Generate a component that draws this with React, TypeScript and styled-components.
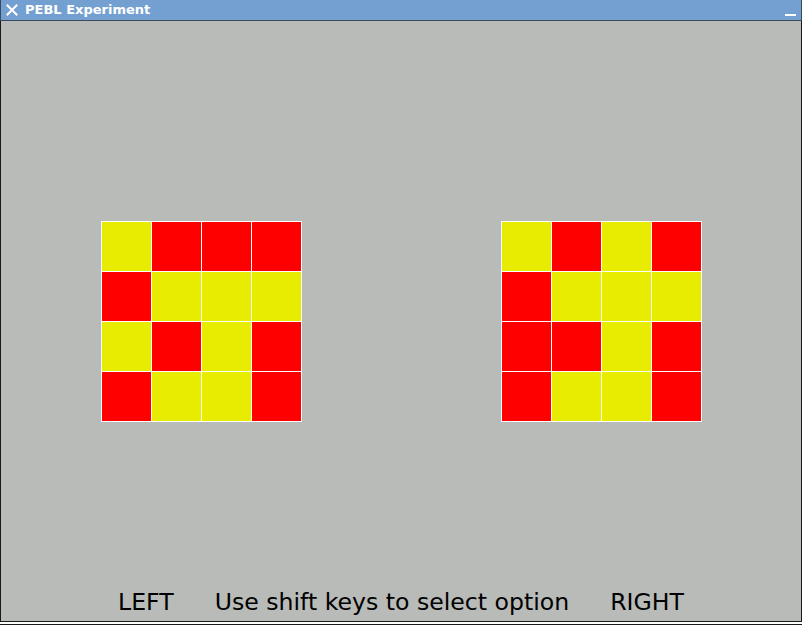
import React from "react";
import styled, { createGlobalStyle } from "styled-components";

const Global = createGlobalStyle`
  html, body { margin: 0; padding: 0; background: #ffffff; }
  body { width: 802px; height: 626px; overflow: hidden; }
`;

const Window = styled.div`
  width: 802px;
  height: 626px;
  box-sizing: border-box;
  display: flex;
  flex-direction: column;
  background: #ffffff;
`;

const TitleBar = styled.div`
  height: 20px;
  background: #74a0d1;
  border-bottom: 1px solid #3a4a5c;
  border-left: 1px solid #3a4a5c;
  border-right: 1px solid #3a4a5c;
  display: flex;
  align-items: center;
  padding: 0 5px 0 5px;
  flex-shrink: 0;
`;

const TitleText = styled.span`
  font-family: "DejaVu Sans", sans-serif;
  font-weight: bold;
  font-size: 13px;
  color: #ffffff;
  margin-left: 7px;
  flex: 1;
  line-height: 20px;
`;

const MinBar = styled.div`
  width: 11px;
  height: 2px;
  background: #ffffff;
  margin-top: 9px;
`;

const Content = styled.div`
  height: 600px;
  background: #b8bbb7;
  border-left: 1px solid #1a1a1a;
  border-right: 1px solid #1a1a1a;
  border-bottom: 1px solid #1a1a1a;
  display: flex;
  flex-direction: column;
  flex-shrink: 0;
`;

const BoardRow = styled.div`
  display: flex;
  padding: 200px 0 0 100px;
  gap: 199px;
`;

const Board = styled.div`
  display: grid;
  grid-template-columns: repeat(4, 49px);
  grid-template-rows: repeat(4, 49px);
  gap: 1px;
  padding: 1px;
  background: #ffffff;
`;

const Cell = styled.div<{ $c: "Y" | "R" }>`
  background: ${(p) => (p.$c === "Y" ? "#e8ec00" : "#ff0000")};
`;

const Prompt = styled.div`
  margin-top: auto;
  margin-bottom: 5px;
  display: flex;
  justify-content: center;
  gap: 41px;
  white-space: pre;
  font-family: "DejaVu Sans", sans-serif;
  font-size: 23.6px;
  line-height: 28px;
  color: #000000;
`;

const BottomEdge = styled.div`
  height: 2px;
  background: #ffffff;
  border-bottom: 1px solid #1a1a1a;
  flex-shrink: 0;
`;

const left = ["YRRR", "RYYY", "YRYR", "RYYR"];
const right = ["YRYR", "RYYY", "RRYR", "RYYR"];

const Grid = ({ rows }: { rows: string[] }) => (
  <Board>
    {rows.join("").split("").map((c, i) => (
      <Cell key={i} $c={c as "Y" | "R"} />
    ))}
  </Board>
);

export default function App() {
  return (
    <>
      <Global />
      <Window>
        <TitleBar>
          <svg width="12" height="12" viewBox="0 0 12 12">
            <path d="M1.5 1.5 L10.5 10.5 M10.5 1.5 L1.5 10.5" stroke="#ffffff" strokeWidth="2" strokeLinecap="square" />
          </svg>
          <TitleText>PEBL Experiment</TitleText>
          <MinBar />
        </TitleBar>
        <Content>
          <BoardRow>
            <Grid rows={left} />
            <Grid rows={right} />
          </BoardRow>
          <Prompt>
            <span>LEFT</span>
            <span>Use shift keys to select option</span>
            <span>RIGHT</span>
          </Prompt>
        </Content>
        <BottomEdge />
      </Window>
    </>
  );
}
